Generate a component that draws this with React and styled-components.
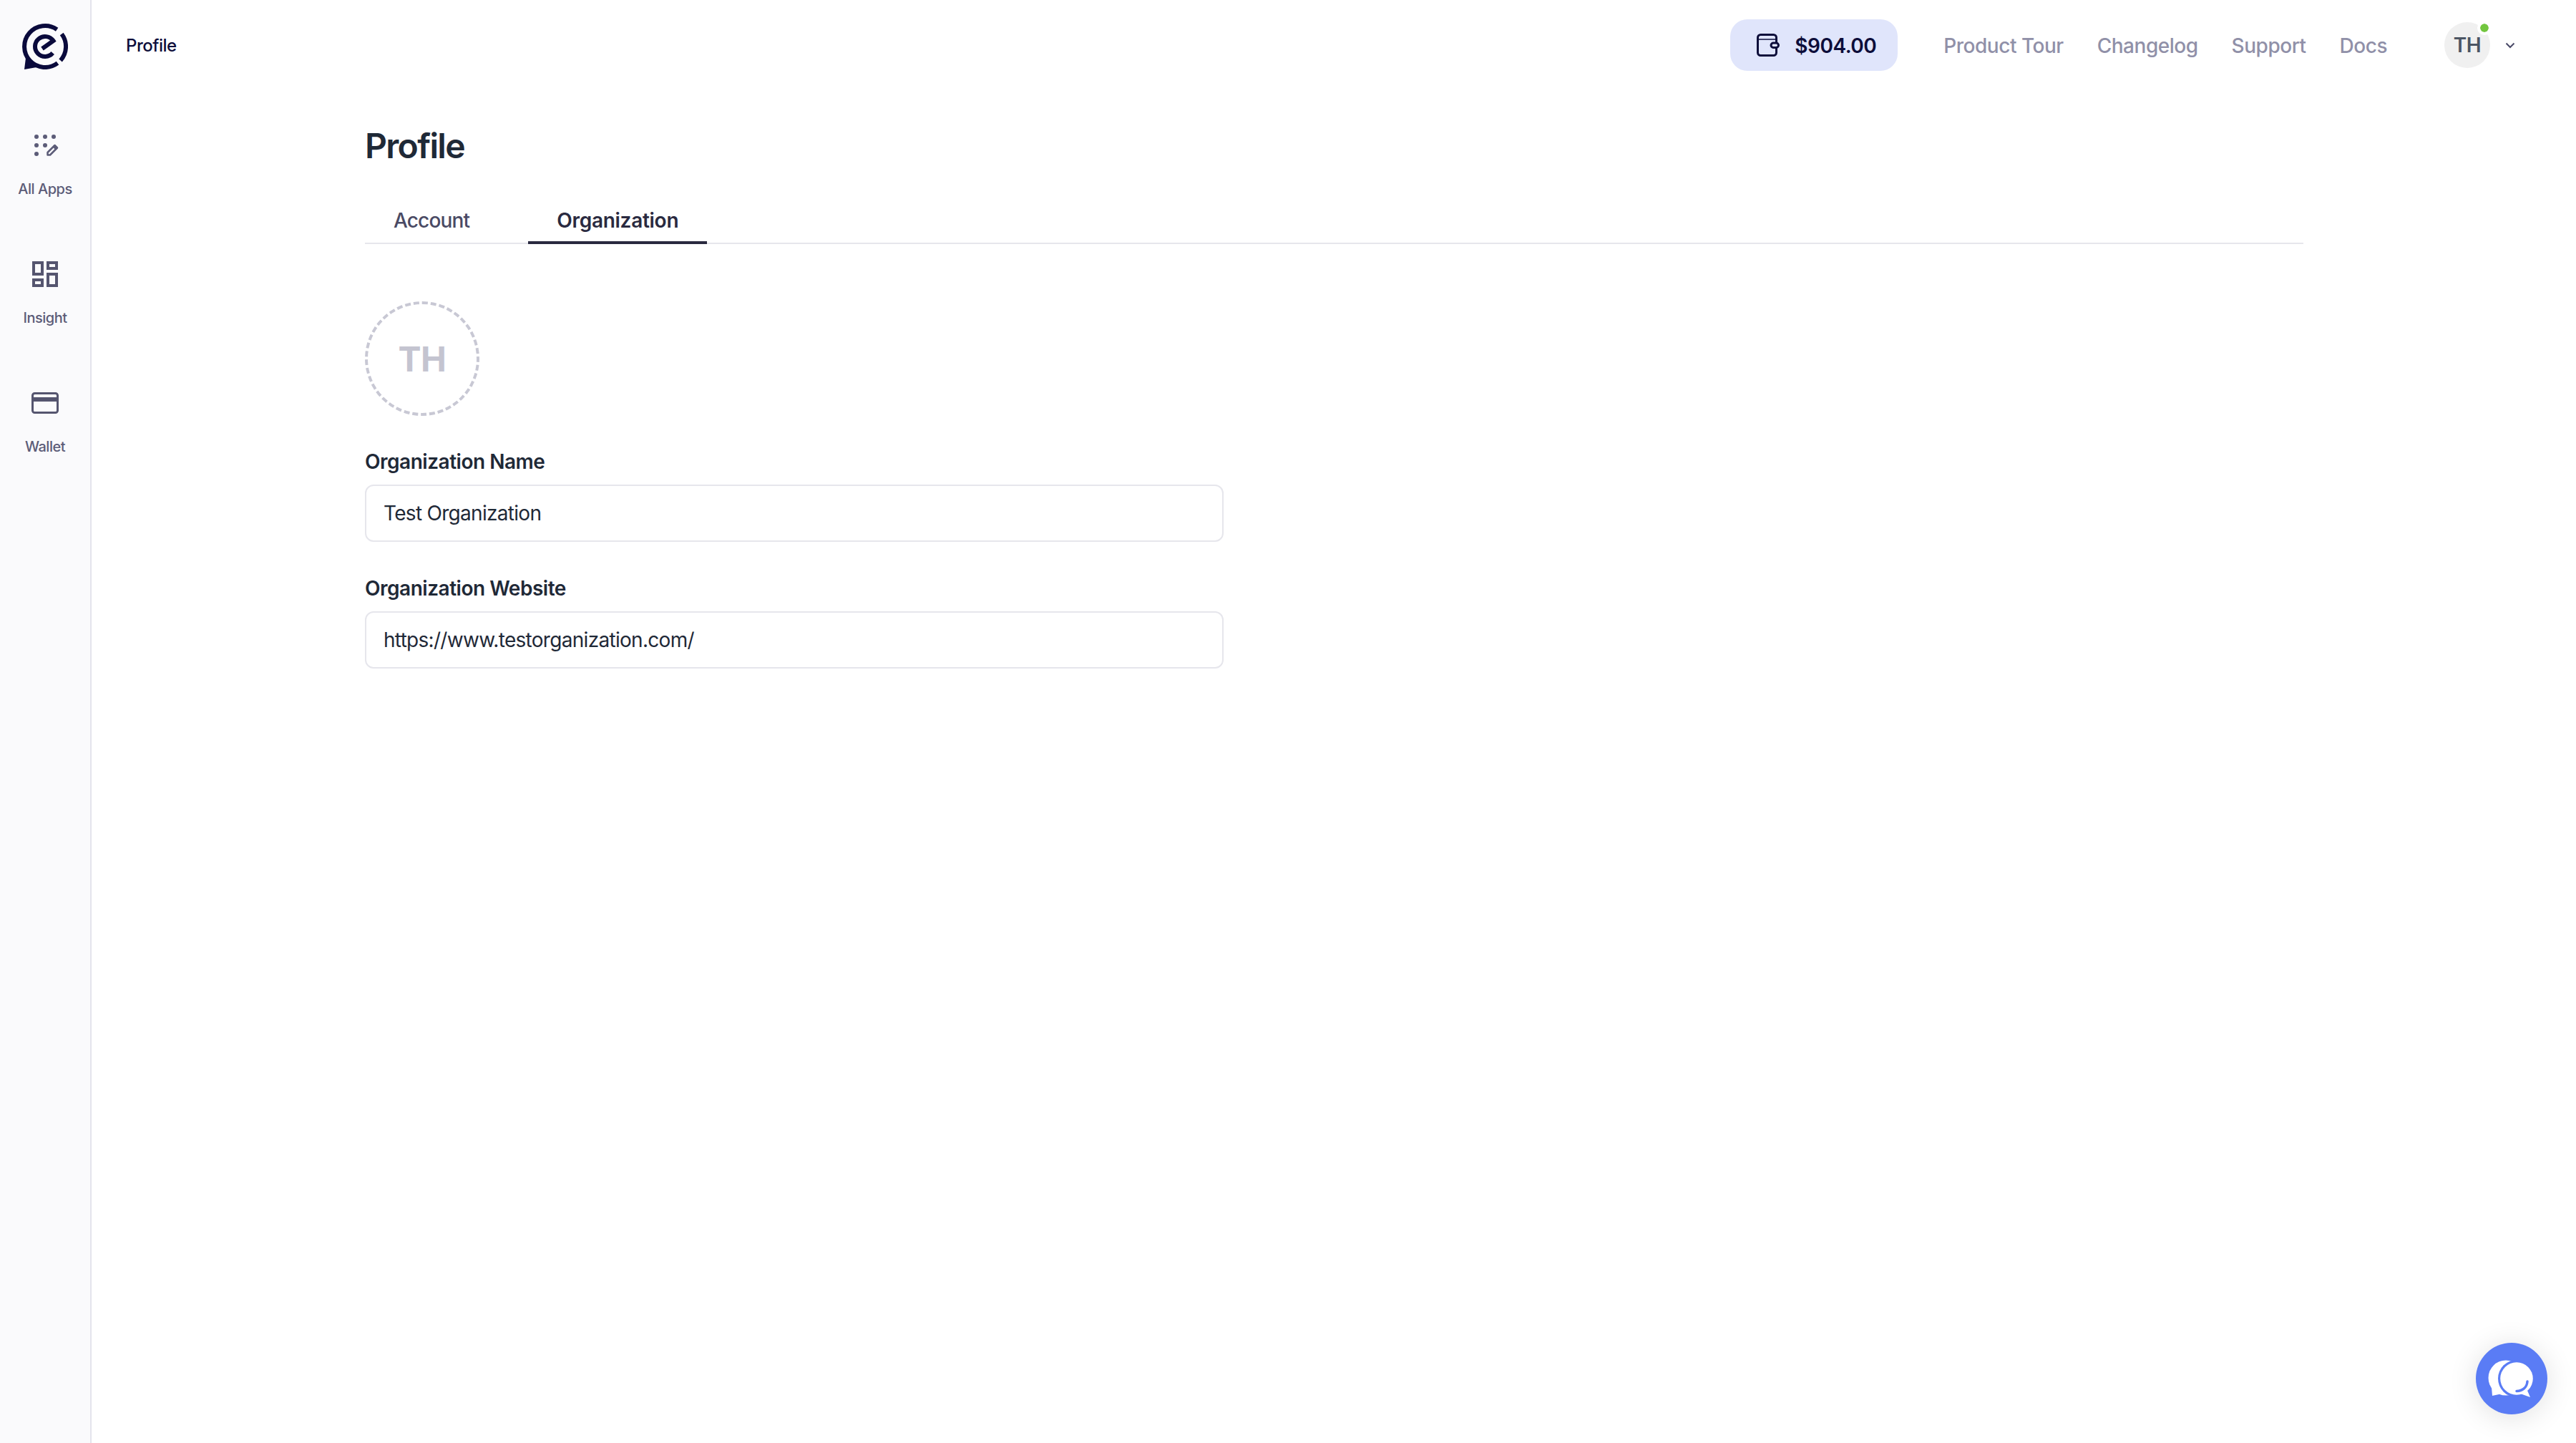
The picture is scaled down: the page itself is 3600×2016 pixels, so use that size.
import React from 'react';
import styled, { createGlobalStyle } from 'styled-components';

const GlobalStyle = createGlobalStyle`
    html, body {
        margin: 0;
        padding: 0;
        background: #fff;
        font-family: Inter, "Noto Sans", sans-serif;
        font-optical-sizing: none;
        letter-spacing: -0.03em;
    }

    * {
        box-sizing: border-box;
    }
`;

const Shell = styled.div`
    display: flex;
    width: 100%;
    height: 2016px;
    overflow: hidden;
`;

const Sidebar = styled.aside`
    flex: 0 0 128px;
    display: flex;
    flex-direction: column;
    align-items: center;
    padding-top: 33px;
    background: #fafafc;
    border-right: 2px solid #e4e4ec;
`;

const LogoWrap = styled.div`
    display: flex;
    height: 64px;
    margin-bottom: 86px;
`;

const SideItem = styled.a`
    display: flex;
    flex-direction: column;
    align-items: center;
    height: 180px;
    color: #5c5c78;
    font-size: 20px;
    font-weight: 500;
    line-height: 28px;

    svg {
        display: block;
        margin-bottom: 27px;
    }
`;

const Main = styled.main`
    flex: 1;
    display: flex;
    flex-direction: column;
    min-width: 0;
`;

const Header = styled.header`
    display: flex;
    align-items: center;
    justify-content: space-between;
    height: 126px;
    padding: 0 80px 0 48px;
`;

const Crumb = styled.div`
    color: #0d0d3a;
    font-size: 24px;
    font-weight: 500;
`;

const HeaderRight = styled.div`
    display: flex;
    align-items: center;
`;

const Balance = styled.div`
    display: flex;
    align-items: center;
    gap: 21px;
    width: 234px;
    height: 72px;
    margin-right: 64px;
    padding-left: 37px;
    background: #e0e5fb;
    border-radius: 24px;
    color: #0d0d3a;
    font-size: 28px;
    font-weight: 600;
`;

const Amount = styled.span`
    padding-top: 2px;
`;

const NavLinks = styled.nav`
    display: flex;
    gap: 47px;
    margin-right: 80px;
`;

const NavLink = styled.a`
    padding-top: 2px;
    color: #9090a8;
    font-size: 28px;
    font-weight: 500;
`;

const UserMenu = styled.div`
    display: flex;
    align-items: center;
    gap: 16px;
`;

const UserAvatar = styled.div`
    position: relative;
    display: flex;
    align-items: center;
    justify-content: center;
    width: 64px;
    height: 64px;
    background: #f0f0f0;
    border-radius: 50%;
    color: #4b5563;
    font-size: 28px;
    font-weight: 600;
`;

const StatusDot = styled.span`
    position: absolute;
    top: -2px;
    right: -2px;
    width: 20px;
    height: 20px;
    background: #72c63f;
    border: 4px solid #fff;
    border-radius: 50%;
    background-clip: padding-box;
`;

const Content = styled.section`
    width: 2709px;
    margin-left: 382px;
    padding-top: 48px;
`;

const Title = styled.h1`
    margin: 0 0 56px;
    color: #1f2937;
    font-size: 48px;
    font-weight: 600;
    letter-spacing: -0.035em;
    line-height: 60px;
`;

const TabBar = styled.div`
    display: flex;
    gap: 42px;
    margin-bottom: 80px;
    box-shadow: inset 0 -2px 0 #e6e6ec;
`;

const Tab = styled.a`
    padding: 0 40px 11px;
    border-bottom: 4px solid ${props => (props.$active ? '#2a2a40' : 'transparent')};
    color: ${props => (props.$active ? '#2a2a40' : '#4a4a64')};
    font-size: 28px;
    font-weight: ${props => (props.$active ? 600 : 500)};
    letter-spacing: ${props => (props.$active ? '-0.01em' : '-0.03em')};
    line-height: 36px;
`;

const OrgAvatar = styled.div`
    display: flex;
    align-items: center;
    justify-content: center;
    width: 160px;
    height: 160px;
    margin-bottom: 46px;
    border: 4px dashed #c8c8d4;
    border-radius: 50%;
    color: #c4c4d0;
    font-size: 48px;
    font-weight: 700;
`;

const Field = styled.div`
    width: 1200px;
    margin-bottom: 47px;
`;

const Label = styled.label`
    display: block;
    margin-bottom: 14px;
    color: #1f2937;
    font-size: 28px;
    font-weight: 600;
    line-height: 36px;
`;

const Input = styled.input`
    display: block;
    width: 100%;
    height: 80px;
    padding: 0 24px;
    background: #fff;
    border: 2px solid #e6e6ec;
    border-radius: 12px;
    outline: none;
    color: #1f2937;
    font-family: inherit;
    font-size: 28px;
    font-weight: 400;
    letter-spacing: -0.025em;
`;

const ChatButton = styled.button`
    position: fixed;
    right: 40px;
    bottom: 40px;
    width: 100px;
    height: 100px;
    padding: 0;
    background: #5a7cf5;
    border: none;
    border-radius: 50%;
    box-shadow: 0 4px 40px rgba(0, 0, 0, 0.12);

    svg {
        display: block;
    }
`;

const Logo = () => (
    <svg width="64" height="64" viewBox="0 0 64 64" fill="none" stroke="#0a0a3c" strokeWidth="6">
        <path d="M48.6 8.2A29 29 0 1 0 49.5 55.2" />
        <path d="M55.2 14.5A29 29 0 0 1 53.6 51.4" />
        <path d="M42.7 41A14 14 0 1 1 43.5 24L28 35" />
        <polygon points="5,48 3,64 20,61" fill="#0a0a3c" stroke="none" />
    </svg>
);

const AppsIcon = () => (
    <svg width="40" height="40" viewBox="0 0 40 40" fill="#5c5c78">
        <circle cx="8" cy="8" r="3" />
        <circle cx="20" cy="8" r="3" />
        <circle cx="32" cy="8" r="3" />
        <circle cx="8" cy="20" r="3" />
        <circle cx="20" cy="20" r="3" />
        <circle cx="8" cy="32" r="3" />
        <path d="M23.5 33.5V30l10-10 3.500 3.500-10 10z" fill="none" stroke="#5c5c78" strokeWidth="2.5" strokeLinejoin="round" />
        <path d="M31 22.5l2.5-3.500 4 4-3.500 3z" />
    </svg>
);

const InsightIcon = () => (
    <svg width="40" height="40" viewBox="0 0 40 40" fill="none" stroke="#55556f" strokeWidth="4">
        <rect x="4" y="4" width="12" height="16" />
        <rect x="24" y="4" width="12" height="8" />
        <rect x="4" y="28" width="12" height="8" />
        <rect x="24" y="20" width="12" height="16" />
    </svg>
);

const CardIcon = () => (
    <svg width="40" height="40" viewBox="0 0 40 40" fill="none">
        <rect x="2.5" y="6.5" width="35" height="27" rx="3" stroke="#55556f" strokeWidth="3" />
        <rect x="2" y="12" width="36" height="6" fill="#55556f" />
    </svg>
);

const WalletIcon = () => (
    <svg width="32" height="32" viewBox="0 0 32 32" fill="none" stroke="#0d0d3a" strokeWidth="3">
        <rect x="1.5" y="1.5" width="26" height="29" rx="4" />
        <path d="M2 8h25" strokeWidth="1.5" />
        <rect x="20" y="13" width="10.5" height="6.5" rx="3.2" fill="#e0e5fb" />
    </svg>
);

const Chevron = () => (
    <svg width="24" height="24" viewBox="0 0 24 24" fill="none" stroke="#4a4a68" strokeWidth="2">
        <path d="M6.5 9.500l5.500 5.500 5.500-5.500" />
    </svg>
);

const ChatIcon = () => (
    <svg width="100" height="100" viewBox="0 0 100 100">
        <circle cx="42" cy="49" r="24.5" fill="#fff" />
        <path d="M22 62l1 12 14-3z" fill="#fff" />
        <circle cx="57" cy="50" r="26" fill="#5a7cf5" />
        <circle cx="57" cy="50" r="22.8" fill="#fff" />
        <path d="M70 62l6 14-14-5z" fill="#fff" />
        <path d="M57 67.5c8 0 14.500-5 15-13.500" fill="none" stroke="#5a7cf5" strokeWidth="3.5" strokeLinecap="round" />
    </svg>
);

const sideItems = [
    { label: 'All Apps', icon: <AppsIcon /> },
    { label: 'Insight', icon: <InsightIcon /> },
    { label: 'Wallet', icon: <CardIcon /> }
];

const navLinks = ['Product Tour', 'Changelog', 'Support', 'Docs'];

export default function App() {
    return (
        <Shell>
            <GlobalStyle />
            <Sidebar>
                <LogoWrap><Logo /></LogoWrap>
                {sideItems.map(item => (
                    <SideItem key={item.label}>
                        {item.icon}
                        {item.label}
                    </SideItem>
                ))}
            </Sidebar>
            <Main>
                <Header>
                    <Crumb>Profile</Crumb>
                    <HeaderRight>
                        <Balance>
                            <WalletIcon />
                            <Amount>$904.00</Amount>
                        </Balance>
                        <NavLinks>
                            {navLinks.map(link => <NavLink key={link}>{link}</NavLink>)}
                        </NavLinks>
                        <UserMenu>
                            <UserAvatar>
                                TH
                                <StatusDot />
                            </UserAvatar>
                            <Chevron />
                        </UserMenu>
                    </HeaderRight>
                </Header>
                <Content>
                    <Title>Profile</Title>
                    <TabBar>
                        <Tab>Account</Tab>
                        <Tab $active>Organization</Tab>
                    </TabBar>
                    <OrgAvatar>TH</OrgAvatar>
                    <Field>
                        <Label htmlFor="org-name">Organization Name</Label>
                        <Input id="org-name" type="text" defaultValue="Test Organization" />
                    </Field>
                    <Field>
                        <Label htmlFor="org-website">Organization Website</Label>
                        <Input id="org-website" type="text" defaultValue="https://www.testorganization.com/" />
                    </Field>
                </Content>
            </Main>
            <ChatButton><ChatIcon /></ChatButton>
        </Shell>
    );
}
